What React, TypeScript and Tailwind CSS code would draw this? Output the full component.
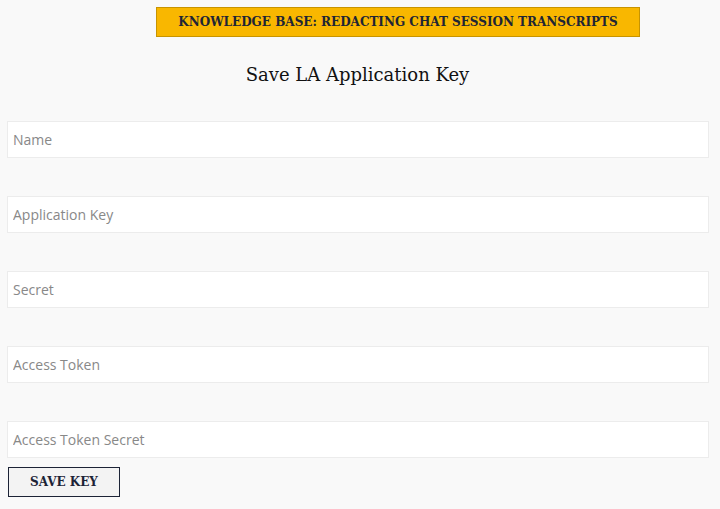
export default function App() {
  const fields = ["Name", "Application Key", "Secret", "Access Token", "Access Token Secret"];

  return (
    <div className="min-h-[509px] bg-[#f9f9f9] px-[7px] pt-[7px] font-['Open_Sans',sans-serif]">
      {/* Banner */}
      <div className="ml-[149px] flex h-[30px] w-[484px] items-center justify-center border border-[#c89400] bg-[#f9b700]">
        <span className="font-['DejaVu_Serif',serif] text-[12px] font-bold text-[#1e2535]">
          KNOWLEDGE BASE: REDACTING CHAT SESSION TRANSCRIPTS
        </span>
      </div>

      <h1 className="mt-[23px] pr-[5px] text-center font-['DejaVu_Serif',serif] text-[18px] leading-[30px] text-[#111]">
        Save LA Application Key
      </h1>

      <form className="mt-[31px] flex w-[702px] flex-col gap-[38px]">
        {fields.map((f) => (
          <input
            key={f}
            placeholder={f}
            className="h-[37px] w-full border border-[#ececec] bg-white px-[5px] text-[14px] text-[#333] outline-none placeholder:text-[#888]"
          />
        ))}
      </form>

      <button className="ml-px mt-[9px] h-[30px] w-[112px] border border-[#1c2336] bg-[#f3f3f3] font-['DejaVu_Serif',serif] text-[12px] font-bold text-[#1c2336]">
        SAVE KEY
      </button>
    </div>
  );
}
